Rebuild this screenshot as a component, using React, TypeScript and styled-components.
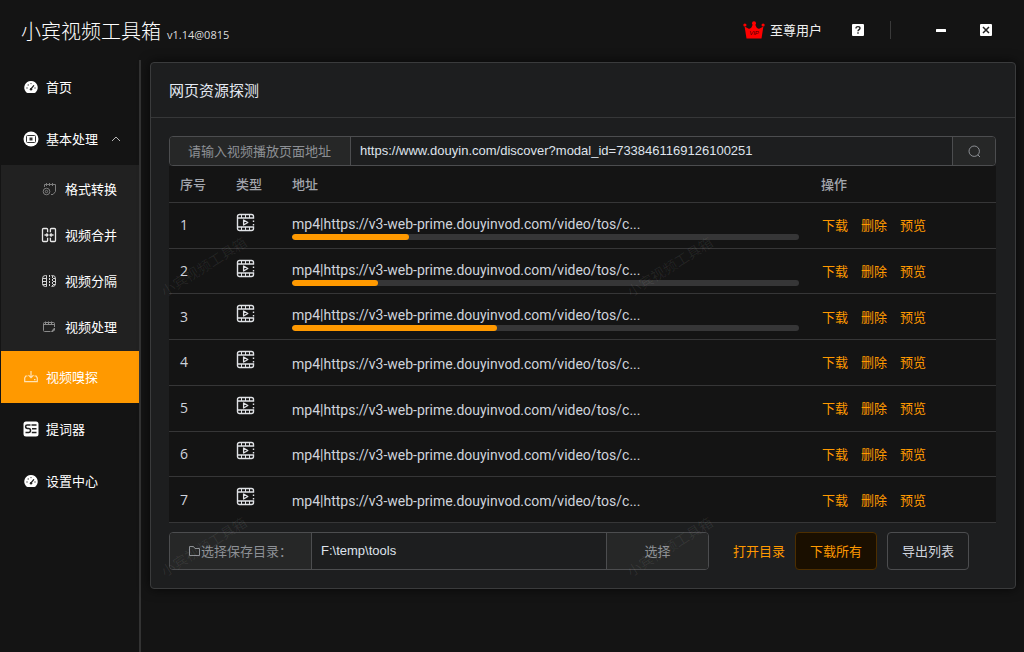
import React from "react";
import styled, { createGlobalStyle, css } from "styled-components";

const GlobalStyle = createGlobalStyle`
  * { box-sizing: border-box; }
  body {
    margin: 0;
    background: #141414;
    color: #cfd3dc;
    font: 13px/20px "Open Sans", "Noto Sans CJK SC", sans-serif;
  }
  button, input { font: inherit; color: inherit; }
  button { cursor: pointer; }
  a { color: inherit; text-decoration: none; }
`;

const Shell = styled.div`
  min-height: 100vh;
  display: flex;
  flex-direction: column;
`;

const TopBar = styled.header`
  height: 60px;
  padding: 0 32px 0 21px;
  display: flex;
  align-items: center;
`;

const Brand = styled.h1`
  flex: 1;
  margin: 0;
  padding-top: 7px;
  display: flex;
  align-items: baseline;
  gap: 6px;
  color: #ffffff;
  font-size: 20px;
  line-height: 28px;
  font-weight: 300;
`;

const Version = styled.small`
  font-size: 11px;
  font-weight: 400;
  color: #dcdcdc;
`;

const UserLevel = styled.div`
  display: flex;
  align-items: center;
  gap: 5px;
  color: #f0f0f0;
`;

const WindowButton = styled.button<{ $gap: number }>`
  display: flex;
  width: 12px;
  height: 12px;
  margin-left: ${(p) => p.$gap}px;
  padding: 0;
  border: 0;
  background: none;
`;

const Separator = styled.span`
  width: 1px;
  height: 18px;
  margin-left: 26px;
  background: #3a3a3a;
`;

const Body = styled.div`
  flex: 1;
  display: flex;
`;

const Sidebar = styled.nav`
  width: 141px;
  flex: none;
  padding: 1px 0 0 1px;
  border-right: 2px solid #333333;
`;

const itemBase = css`
  width: 100%;
  display: flex;
  align-items: center;
  color: #ffffff;
`;

const MenuItem = styled.a<{ $active?: boolean }>`
  ${itemBase}
  height: 52px;
  padding-left: 22px;
  gap: 7px;
  background: ${(p) => (p.$active ? "#ff9900" : "transparent")};
`;

const MenuToggle = styled.button`
  ${itemBase}
  height: 52px;
  padding: 0 18px 0 22px;
  gap: 7px;
  border: 0;
  background: none;
  text-align: left;
`;

const ToggleLabel = styled.span`
  flex: 1;
`;

const SubMenu = styled.div`
  padding: 1px 0;
  background: #212121;
`;

const SubItem = styled.a`
  ${itemBase}
  height: 46px;
  padding-left: 40px;
  gap: 8px;
`;

const SubIcon = styled.span`
  width: 16px;
  display: flex;
  justify-content: center;
`;

const Main = styled.main`
  flex: 1;
  min-width: 0;
  padding: 2px 8px 24px 9px;
`;

const Panel = styled.section`
  position: relative;
  overflow: hidden;
  border: 1px solid #3a3b3c;
  border-radius: 4px;
  background: #1d1e1f;
  box-shadow: 0 0 12px rgba(0, 0, 0, 0.7);
`;

const PanelTitle = styled.h2`
  margin: 0;
  padding: 17px 18px 16px;
  border-bottom: 1px solid #363738;
  color: #e5eaf3;
  font-size: 15px;
  line-height: 21px;
  font-weight: 400;
`;

const PanelBody = styled.div`
  padding: 18px 19px 18px 18px;
`;

const InputGroup = styled.div<{ $height: number }>`
  flex: 1;
  min-width: 0;
  height: ${(p) => p.$height}px;
  display: flex;
  border: 1px solid #4c4d4f;
  border-radius: 4px;
  overflow: hidden;
`;

const addon = css`
  flex: none;
  display: flex;
  align-items: center;
  background: #262727;
  color: #8d9095;
`;

const Prepend = styled.label<{ $width: number }>`
  ${addon}
  width: ${(p) => p.$width}px;
  padding-left: 18px;
  border-right: 1px solid #4c4d4f;
`;

const Append = styled.button<{ $width: number }>`
  ${addon}
  width: ${(p) => p.$width}px;
  justify-content: center;
  padding: 0;
  border: 0;
  border-left: 1px solid #4c4d4f;
`;

const TextInput = styled.input`
  flex: 1;
  min-width: 0;
  padding: 0 9px;
  border: 0;
  outline: 0;
  background: transparent;
  color: #dfe3ec;
  font-family: "Liberation Sans", "Noto Sans CJK SC", sans-serif;
`;

const ResourceTable = styled.table`
  width: 100%;
  height: 357px;
  table-layout: fixed;
  border-collapse: separate;
  border-spacing: 0;
  background: #141414;
`;

const HeadCell = styled.th<{ $width?: number }>`
  width: ${(p) => (p.$width ? `${p.$width}px` : "auto")};
  height: 37px;
  padding: 0 11px;
  border-bottom: 1px solid #363637;
  color: #a3a6ad;
  text-align: left;
  font-weight: 500;
`;

const Cell = styled.td`
  height: 45px;
  padding: 0 11px;
  border-bottom: 1px solid #363637;
  font-size: 14px;
`;

const TypeIcon = styled.span`
  display: flex;
  padding-bottom: 6px;
`;

const Address = styled.div`
  padding-top: 3px;
  font-family: Roboto, "Noto Sans CJK SC", sans-serif;
  overflow: hidden;
  white-space: nowrap;
  text-overflow: ellipsis;
`;

const Track = styled.div`
  height: 6px;
  border-radius: 3px;
  background: #363637;
  overflow: hidden;
`;

const Fill = styled.div`
  height: 100%;
  border-radius: 3px;
  background: #ff9900;
`;

const RowActions = styled.div`
  display: flex;
  gap: 13px;
  padding-left: 1px;
`;

const TextButton = styled.button`
  padding: 0;
  border: 0;
  background: none;
  color: #ff9900;
  font-size: 13px;
`;

const Footer = styled.div`
  display: flex;
  align-items: center;
  padding: 9px 27px 0 0;
`;

const FooterActions = styled.div`
  display: flex;
  gap: 10px;
  padding-left: 24px;
`;

const BoxButton = styled.button<{ $primary?: boolean }>`
  width: 82px;
  height: 38px;
  padding: 0;
  border: 1px solid ${(p) => (p.$primary ? "#4d2e00" : "#4c4d4f")};
  border-radius: 4px;
  background: ${(p) => (p.$primary ? "#1a0f00" : "transparent")};
  color: ${(p) => (p.$primary ? "#ff9900" : "#cfd3dc")};
`;

const WatermarkLayer = styled.div`
  position: absolute;
  inset: 0;
  padding-top: 194px;
  padding-left: 3px;
  display: grid;
  grid-template-columns: repeat(2, 466px);
  grid-template-rows: 280px 20px;
  overflow: hidden;
  pointer-events: none;
`;

const Watermark = styled.span`
  width: 100px;
  height: 20px;
  text-align: center;
  white-space: nowrap;
  font-size: 14px;
  transform: rotate(-32deg);
  color: rgba(255, 255, 255, 0.07);
`;

const GaugeIcon = () => (
  <svg width="16" height="16" viewBox="0 0 16 16" aria-hidden="true">
    <path d="M8 2a6.6 6.6 0 0 0-5 11c.5.6 1 .9 1.700.9h6.600c.7 0 1.200-.3 1.700-.9A6.600 6.600 0 0 0 8 2z" fill="#fff" />
    <path d="M8 10l2.700-3.300" stroke="#222" strokeWidth="1.200" strokeLinecap="round" />
    <circle cx="8" cy="10.300" r="1.200" fill="#222" />
    <g fill="#444">
      <circle cx="4" cy="9" r=".7" />
      <circle cx="5.200" cy="6" r=".7" />
      <circle cx="8" cy="4.600" r=".7" />
      <circle cx="12" cy="9" r=".7" />
    </g>
  </svg>
);

const ProcessIcon = () => (
  <svg width="16" height="16" viewBox="0 0 16 16" aria-hidden="true">
    <circle cx="8" cy="8" r="7.500" fill="#fff" />
    <rect x="3.500" y="4.500" width="9" height="7" rx="1" fill="none" stroke="#333" />
    <rect x="6.500" y="6.500" width="3" height="3" fill="#333" />
  </svg>
);

const ConvertIcon = () => (
  <svg width="14" height="14" viewBox="0 0 14 14" fill="none" stroke="#7d7d7d" aria-hidden="true">
    <path d="M2.500 5V2.500h11V9.500L11 12.500H9" />
    <path d="M4.500 1v3M7.500 1v3M10.500 1v3" />
    <circle cx="4.500" cy="9.500" r="3.300" />
    <circle cx="4.500" cy="9.500" r="1.200" />
  </svg>
);

const MergeIcon = () => (
  <svg width="16" height="16" viewBox="0 0 16 16" fill="none" stroke="#e8e8e8" strokeWidth="1.300" aria-hidden="true">
    <path d="M6.600 5.300V2.500a1 1 0 0 0-1-1H2.500a1 1 0 0 0-1 1v11a1 1 0 0 0 1 1h3.100a1 1 0 0 0 1-1v-2.800" />
    <path d="M9.400 5.300V2.500a1 1 0 0 1 1-1h3.100a1 1 0 0 1 1 1v11a1 1 0 0 1-1 1h-3.100a1 1 0 0 1-1-1v-2.800" />
    <path d="M3.500 8h3.300M12.500 8H9.200M5.500 6.400L7 8 5.500 9.600M10.500 6.400L9 8l1.500 1.600" />
  </svg>
);

const SplitIcon = () => (
  <svg width="14" height="14" viewBox="0 0 14 14" fill="none" stroke="#d6d6d6" aria-hidden="true">
    <path d="M4.500 1.500H3.500a3 3 0 0 0-3 3v5a3 3 0 0 0 3 3h1zM9.500 1.500h1a3 3 0 0 1 3 3v5a3 3 0 0 1-3 3h-1" />
    <path d="M.5 4.500h4M.5 7.500h4M.5 10.500h4M11 4.500h2.500M11 7.500h2.500M11 10.500h2.500" />
    <path d="M7.500 1v12M10.500 2v10" strokeDasharray="2 1" />
  </svg>
);

const HandleIcon = () => (
  <svg width="14" height="14" viewBox="0 0 14 14" fill="none" stroke="#8a8a8a" aria-hidden="true">
    <path d="M12.500 7V3.500a1 1 0 0 0-1-1h-9a1 1 0 0 0-1 1v7a1 1 0 0 0 1 1h6M1.500 4.500h11" />
    <path d="M3.500 1.500V4M6.500 1.500V4M9.500 1.500V4" />
    <path d="M9.500 11.500l3-3.500v2l-1.500 1.500z" fill="#8a8a8a" />
  </svg>
);

const SniffIcon = () => (
  <svg width="16" height="16" viewBox="0 0 16 16" fill="none" stroke="#ffe3b5" strokeWidth="1.200" aria-hidden="true">
    <path d="M4.500 7H2.800L1.700 9v3.600h12.600V9l-1.100-2h-1.700M8 2v6.500M5.500 6.200L8 8.700l2.500-2.500" />
    <path d="M11 10.700h1.500" />
  </svg>
);

const PrompterIcon = () => (
  <svg width="16" height="16" viewBox="0 0 16 16" aria-hidden="true">
    <rect x=".5" y=".5" width="15" height="15" rx="2.500" fill="#fff" />
    <path
      d="M7.500 4H4.300C3 4 2.600 4.700 2.600 5.600S3.200 7.500 4.500 7.500h1.200c1.300 0 1.800.8 1.800 2s-.6 2-1.900 2H2.500M8.500 4h5M9 7.800h4.500M8.800 11.500h4.700"
      fill="none"
      stroke="#222"
      strokeWidth="1.500"
    />
  </svg>
);

const ChevronUp = () => (
  <svg width="10" height="6" viewBox="0 0 10 6" fill="none" stroke="#b5b5b5" aria-hidden="true">
    <path d="M1 5l4-4 4 4" />
  </svg>
);

const CrownIcon = () => (
  <svg width="22" height="18" viewBox="0 0 22 18" aria-hidden="true">
    <g fill="#ff0000">
      <path d="M3.500 17.500L1.600 5.500l3.600 2c1.600.8 3-.2 3.700-1.900L10.500 2h1l1.600 3.600c.7 1.700 2.100 2.700 3.700 1.900l3.600-2L18.500 17.500z" />
      <circle cx="11" cy="2.200" r="2" />
      <circle cx="1.900" cy="4" r="1.600" />
      <circle cx="20.100" cy="4" r="1.600" />
    </g>
    <text x="11" y="14" textAnchor="middle" fontSize="6" fontFamily="Liberation Sans" fontStyle="italic" fill="#4a0000">
      VIP
    </text>
  </svg>
);

const HelpIcon = () => (
  <svg width="12" height="12" viewBox="0 0 12 12" aria-hidden="true">
    <rect width="12" height="12" rx="1" fill="#fff" />
    <path d="M4 4.500C4 3.200 4.800 2.600 6 2.600s2 .7 2 1.700c0 1.300-2 1.400-2 3M6 8.300v1.500" fill="none" stroke="#222" strokeWidth="1.400" />
  </svg>
);

const MinimizeIcon = () => (
  <svg width="12" height="12" viewBox="0 0 12 12" aria-hidden="true">
    <rect x="1" y="5" width="10" height="3" rx=".5" fill="#fff" />
  </svg>
);

const CloseIcon = () => (
  <svg width="12" height="12" viewBox="0 0 12 12" aria-hidden="true">
    <rect width="12" height="12" rx="1" fill="#fff" />
    <path d="M3 3l6 6M9 3l-6 6" stroke="#222" strokeWidth="1.500" />
  </svg>
);

const SearchIcon = () => (
  <svg width="13" height="13" viewBox="0 0 13 13" fill="none" stroke="#8d9095" aria-hidden="true">
    <circle cx="6.200" cy="6.200" r="5.200" />
    <path d="M9.800 9.800l2.200 2.200" />
  </svg>
);

const FolderIcon = () => (
  <svg width="13" height="12" viewBox="0 0 13 12" fill="none" stroke="#8d9095" aria-hidden="true">
    <path d="M1.500 1.500h4l1.500 2h4.500v7h-10z" />
  </svg>
);

const FilmIcon = () => (
  <svg width="19" height="19" viewBox="0 0 19 19" fill="none" stroke="#e0e2e6" role="img" aria-label="视频">
    <path d="M1.500 4.500v-1a2 2 0 0 1 2-2h12a2 2 0 0 1 2 2v1.500h-16v9h16v1.500a2 2 0 0 1-2 2h-12a2 2 0 0 1-2-2z" strokeWidth="1.400" />
    <path d="M5.500 1.500V5M9.500 1.500V5M13.500 1.500V5M5.500 14v3.500M9.500 14v3.500M13.500 14v3.500" />
    <path d="M7.600 7v5L11.800 9.500z" strokeWidth="1.300" strokeLinejoin="round" />
    <path d="M17.500 7.500v1.500M17.500 11v1.500" strokeWidth="1.400" />
  </svg>
);

const ADDRESS = "mp4|https://v3-web-prime.douyinvod.com/video/tos/c...";

const resources: { id: number; progress?: number }[] = [
  { id: 1, progress: 23 },
  { id: 2, progress: 17 },
  { id: 3, progress: 40.5 },
  { id: 4 },
  { id: 5 },
  { id: 6 },
  { id: 7 },
];

const subItems = [
  { label: "格式转换", Icon: ConvertIcon },
  { label: "视频合并", Icon: MergeIcon },
  { label: "视频分隔", Icon: SplitIcon },
  { label: "视频处理", Icon: HandleIcon },
];

export default function App() {
  return (
    <>
      <GlobalStyle />
      <Shell>
        <TopBar>
          <Brand>
            小宾视频工具箱 <Version>v1.14@0815</Version>
          </Brand>
          <UserLevel>
            <CrownIcon />
            至尊用户
          </UserLevel>
          <WindowButton $gap={30} aria-label="帮助"><HelpIcon /></WindowButton>
          <Separator />
          <WindowButton $gap={44} aria-label="最小化"><MinimizeIcon /></WindowButton>
          <WindowButton $gap={33} aria-label="关闭"><CloseIcon /></WindowButton>
        </TopBar>
        <Body>
          <Sidebar>
            <MenuItem href="#home"><GaugeIcon />首页</MenuItem>
            <MenuToggle aria-expanded="true">
              <ProcessIcon />
              <ToggleLabel>基本处理</ToggleLabel>
              <ChevronUp />
            </MenuToggle>
            <SubMenu>
              {subItems.map(({ label, Icon }) => (
                <SubItem href="#basic" key={label}>
                  <SubIcon><Icon /></SubIcon>
                  {label}
                </SubItem>
              ))}
            </SubMenu>
            <MenuItem href="#sniff" $active aria-current="page"><SniffIcon />视频嗅探</MenuItem>
            <MenuItem href="#prompter"><PrompterIcon />提词器</MenuItem>
            <MenuItem href="#settings"><GaugeIcon />设置中心</MenuItem>
          </Sidebar>
          <Main>
            <Panel>
              <PanelTitle>网页资源探测</PanelTitle>
              <PanelBody>
                <InputGroup $height={30}>
                  <Prepend $width={181} htmlFor="page-url">请输入视频播放页面地址</Prepend>
                  <TextInput
                    id="page-url"
                    defaultValue="https://www.douyin.com/discover?modal_id=7338461169126100251"
                  />
                  <Append $width={43} aria-label="搜索"><SearchIcon /></Append>
                </InputGroup>
                <ResourceTable>
                  <thead>
                    <tr>
                      <HeadCell $width={56}>序号</HeadCell>
                      <HeadCell $width={56}>类型</HeadCell>
                      <HeadCell>地址</HeadCell>
                      <HeadCell $width={186}>操作</HeadCell>
                    </tr>
                  </thead>
                  <tbody>
                    {resources.map(({ id, progress }) => (
                      <tr key={id}>
                        <Cell>{id}</Cell>
                        <Cell><TypeIcon><FilmIcon /></TypeIcon></Cell>
                        <Cell>
                          <Address>{ADDRESS}</Address>
                          {progress !== undefined && (
                            <Track role="progressbar" aria-valuenow={progress} aria-label="下载进度">
                              <Fill style={{ width: `${progress}%` }} />
                            </Track>
                          )}
                        </Cell>
                        <Cell>
                          <RowActions>
                            <TextButton>下载</TextButton>
                            <TextButton>删除</TextButton>
                            <TextButton>预览</TextButton>
                          </RowActions>
                        </Cell>
                      </tr>
                    ))}
                  </tbody>
                </ResourceTable>
                <Footer>
                  <InputGroup $height={38}>
                    <Prepend $width={142} htmlFor="save-dir"><FolderIcon />选择保存目录：</Prepend>
                    <TextInput id="save-dir" defaultValue="F:\temp\tools" />
                    <Append $width={102}>选择</Append>
                  </InputGroup>
                  <FooterActions>
                    <TextButton>打开目录</TextButton>
                    <BoxButton $primary>下载所有</BoxButton>
                    <BoxButton>导出列表</BoxButton>
                  </FooterActions>
                </Footer>
              </PanelBody>
              <WatermarkLayer aria-hidden="true">
                {[0, 1, 2, 3].map((n) => (
                  <Watermark key={n}>小宾视频工具箱</Watermark>
                ))}
              </WatermarkLayer>
            </Panel>
          </Main>
        </Body>
      </Shell>
    </>
  );
}
